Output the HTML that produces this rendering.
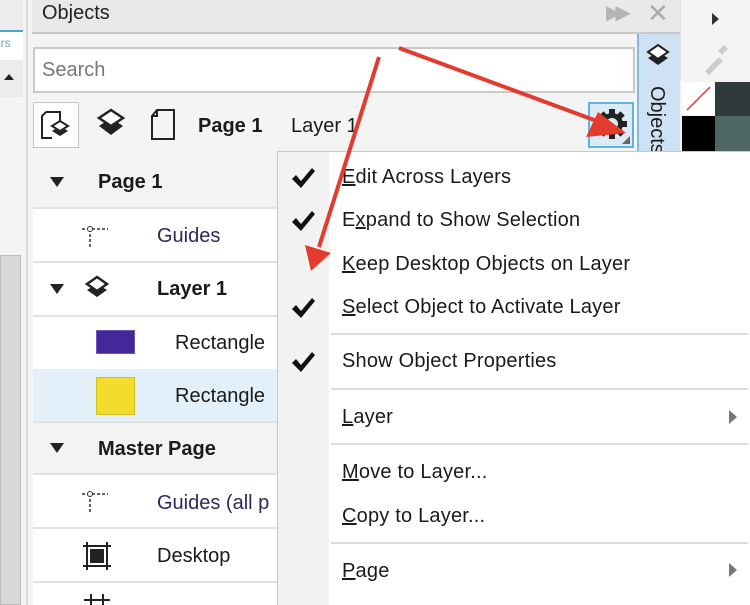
<!DOCTYPE html>
<html><head><meta charset="utf-8"><style>
*{margin:0;padding:0;box-sizing:border-box}
html{overflow:hidden}
body{width:750px;height:605px;overflow:hidden;position:relative;background:#f4f4f4;font-family:"Liberation Sans",sans-serif;color:#1a1a1a}
.a{position:absolute}
.t{position:absolute;font-size:20px;white-space:nowrap}
.row{position:absolute;left:33px;width:245px;border-bottom:2px solid #e2e2e2;background:#fff}
.mi{position:absolute;left:342px;font-size:20px;color:#1a1a1a;white-space:nowrap;letter-spacing:0.2px}
.ck{position:absolute;left:290px;width:26px;height:24px}
.sep{position:absolute;left:331px;right:2px;height:2px;background:#dcdcdc}
</style></head><body>
<svg width="0" height="0" style="position:absolute"><defs><symbol id="ck" viewBox="0 0 26 24"><path d="M2 13l4-4 5 6L22 2l3 3-14 17z" fill="#111"/></symbol></defs></svg>
<!-- left strip -->
<div class="a" style="left:0;top:0;width:24px;height:605px;background:#f4f4f4"></div>
<div class="a" style="left:0;top:0;width:23px;height:31px;background:#ececec"></div>
<div class="a" style="left:0;top:30px;width:23px;height:2px;background:#4aa8d8"></div>
<div class="a" style="left:0;top:32px;width:23px;height:28px;background:#fff"></div>
<div class="t" style="left:-6px;top:36px;font-size:12px;color:#6a9ec0">ers</div>
<div class="a" style="left:0;top:60px;width:23px;height:37px;background:#ececec"></div>
<div class="a" style="left:4px;top:74px;width:0;height:0;border-left:5px solid transparent;border-right:5px solid transparent;border-bottom:6px solid #222"></div>
<div class="a" style="left:0;top:255px;width:21px;height:350px;background:#d8d8d8;border:1px solid #bbb"></div>
<div class="a" style="left:26px;top:0;width:2px;height:605px;background:#dadada"></div>
<!-- header -->
<div class="a" style="left:32px;top:0;width:648px;height:34px;background:#e9e9e9;border-bottom:2px solid #c8c8c8"></div>
<div class="t" style="left:42px;top:2px;font-size:20px;color:#222">Objects</div>
<div class="t" style="left:606px;top:0px;font-size:20px;color:#b5b5b5;letter-spacing:-6px">▶▶</div>
<div class="t" style="left:647px;top:-2px;font-size:26px;color:#aaa">✕</div>
<!-- search -->
<div class="a" style="left:33px;top:47px;width:602px;height:46px;background:#fff;border:2px solid #c9c9c9"></div>
<div class="t" style="left:42px;top:59px;font-size:20px;color:#777">Search</div>
<!-- toolbar -->
<div class="a" style="left:33px;top:102px;width:46px;height:46px;background:#fff;border:1px solid #c4c4c4"></div>
<svg class="a" style="left:38px;top:107px" width="36" height="36" viewBox="0 0 36 36"><path d="M8 5h14v12M8 5l-4 4v22h10" fill="none" stroke="#222" stroke-width="2"/><path d="M22 14l8 5-8 5-8-5z" fill="#fff" stroke="#222" stroke-width="2"/><path d="M14 24l8 5 8-5-3-2-5 3-5-3z" fill="#222"/></svg>
<svg class="a" style="left:93px;top:107px" width="36" height="36" viewBox="0 0 36 36"><path d="M18 3l12 8-12 8-12-8z" fill="#fff" stroke="#222" stroke-width="2.5"/><path d="M6 19l6-4 6 4 6-4 6 4-12 9z" fill="#222"/></svg>
<svg class="a" style="left:148px;top:107px" width="34" height="36" viewBox="0 0 34 36"><path d="M9 3h17v29H4V9z M9 3v6H4" fill="none" stroke="#222" stroke-width="2"/></svg>
<div class="t" style="left:198px;top:115px;font-weight:bold;font-size:20px">Page 1</div>
<div class="t" style="left:291px;top:115px;font-size:20px">Layer 1</div>
<div class="a" style="left:588px;top:102px;width:46px;height:46px;background:#dbeaf6;border:2px solid #5cb6e2"></div>
<svg class="a" style="left:596px;top:108px" width="32" height="32" viewBox="0 0 32 32"><g fill="#222"><circle cx="16" cy="16" r="11"/><g id="tt"><rect x="13" y="1" width="6" height="30"/><rect x="1" y="13" width="30" height="6"/></g><use href="#tt" transform="rotate(45 16 16)"/></g><circle cx="16" cy="16" r="6" fill="#dbeaf6"/></svg>
<div class="a" style="left:622px;top:136px;width:0;height:0;border-left:8px solid transparent;border-bottom:8px solid #666"></div>
<!-- right tab -->
<div class="a" style="left:637px;top:34px;width:43px;height:120px;background:#cfe2f4;border-left:2px solid #7fbde6"></div>
<svg class="a" style="left:644px;top:43px" width="28" height="28" viewBox="0 0 28 28"><path d="M14 2l10 7-10 7-10-7z" fill="#fff" stroke="#222" stroke-width="2"/><path d="M4 15l5-3 5 3 5-3 5 3-10 7z" fill="#222"/></svg>
<div class="t" style="left:646px;top:86px;font-size:20px;transform-origin:0 0;transform:rotate(90deg) translate(0,-22px)">Objects</div>
<!-- far right -->
<div class="a" style="left:680px;top:0;width:70px;height:80px;background:#f4f4f4;border-left:1px solid #ddd"></div>
<div class="a" style="left:712px;top:13px;width:0;height:0;border-top:6px solid transparent;border-bottom:6px solid transparent;border-left:7px solid #333"></div>
<svg class="a" style="left:700px;top:43px" width="30" height="32" viewBox="0 0 30 32"><path d="M5 28l14-14 4 4-14 14z" fill="#ccc"/><path d="M18 8l6-6 4 4-6 6z" fill="#ccc"/></svg>
<div class="a" style="left:682px;top:82px;width:33px;height:33px;background:#fff"></div>
<svg class="a" style="left:682px;top:82px" width="33" height="33"><line x1="5" y1="28" x2="28" y2="5" stroke="#e33" stroke-width="1.5"/></svg>
<div class="a" style="left:715px;top:82px;width:35px;height:35px;background:#2f3a3b"></div>
<div class="a" style="left:682px;top:116px;width:33px;height:40px;background:#000"></div>
<div class="a" style="left:715px;top:116px;width:35px;height:40px;background:#4e6866"></div>
<!-- tree -->
<div class="row" style="top:156px;height:53px;background:#f3f3f3"></div>
<div class="a" style="left:50px;top:177px;border-left:7px solid transparent;border-right:7px solid transparent;border-top:10px solid #222"></div>
<div class="t" style="left:98px;top:171px;font-weight:bold;font-size:20px">Page 1</div>
<div class="row" style="top:209px;height:54px"></div>
<svg class="a" style="left:80px;top:225px" width="30" height="26"><path d="M2 4h26M10 4v20" stroke="#333" stroke-width="1.5" stroke-dasharray="3 2" fill="none"/><circle cx="10" cy="4" r="2.5" fill="#fff" stroke="#333"/></svg>
<div class="t" style="left:157px;top:225px;color:#2a2a5a">Guides</div>
<div class="row" style="top:263px;height:54px"></div>
<div class="a" style="left:50px;top:284px;border-left:7px solid transparent;border-right:7px solid transparent;border-top:10px solid #222"></div>
<svg class="a" style="left:83px;top:275px" width="28" height="28" viewBox="0 0 28 28"><path d="M14 2l10 7-10 7-10-7z" fill="#fff" stroke="#222" stroke-width="2.5"/><path d="M4 15l5-3 5 3 5-3 5 3-10 7z" fill="#222"/></svg>
<div class="t" style="left:157px;top:278px;font-weight:bold;font-size:20px">Layer 1</div>
<div class="row" style="top:317px;height:52px;border-bottom:none"></div>
<div class="a" style="left:96px;top:330px;width:39px;height:24px;background:#44289a;border:1px solid #6a5ab8"></div>
<div class="t" style="left:175px;top:332px">Rectangle</div>
<div class="row" style="top:369px;height:54px;background:#e3f0fa"></div>
<div class="a" style="left:96px;top:377px;width:39px;height:38px;background:#f3dc2c;border:1px solid #d8c020"></div>
<div class="t" style="left:175px;top:385px">Rectangle</div>
<div class="row" style="top:423px;height:52px;background:#f3f3f3"></div>
<div class="a" style="left:50px;top:443px;border-left:7px solid transparent;border-right:7px solid transparent;border-top:10px solid #222"></div>
<div class="t" style="left:98px;top:438px;font-weight:bold;font-size:20px">Master Page</div>
<div class="row" style="top:475px;height:54px"></div>
<svg class="a" style="left:80px;top:490px" width="30" height="26"><path d="M2 4h26M10 4v20" stroke="#333" stroke-width="1.5" stroke-dasharray="3 2" fill="none"/><circle cx="10" cy="4" r="2.5" fill="#fff" stroke="#333"/></svg>
<div class="t" style="left:157px;top:492px;color:#2a2a5a">Guides (all p</div>
<div class="row" style="top:529px;height:54px"></div>
<svg class="a" style="left:82px;top:541px" width="30" height="30"><path d="M5 1v28M25 1v28M1 5h28M1 25h28" stroke="#222" stroke-width="2"/><rect x="8" y="8" width="14" height="14" fill="#222"/></svg>
<div class="t" style="left:157px;top:545px">Desktop</div>
<div class="row" style="top:583px;height:22px;border-bottom:none"></div>
<svg class="a" style="left:82px;top:594px" width="30" height="11"><path d="M9 0v11M21 0v11M2 6h26" stroke="#222" stroke-width="2"/></svg>
<!-- menu -->
<div class="a" style="left:277px;top:151px;width:473px;height:454px;background:#fff;border:1px solid #c8c8c8;border-bottom:none;border-right:none"></div>
<div class="a" style="left:278px;top:152px;width:51px;height:453px;background:#f2f2f2"></div>
<svg class="ck" style="top:166px"><use href="#ck"/></svg>
<div class="mi" style="top:166px"><u>E</u>dit Across Layers</div>
<svg class="ck" style="top:209px"><use href="#ck"/></svg>
<div class="mi" style="top:209px">E<u>x</u>pand to Show Selection</div>
<div class="mi" style="top:253px"><u>K</u>eep Desktop Objects on Layer</div>
<svg class="ck" style="top:296px"><use href="#ck"/></svg>
<div class="mi" style="top:296px"><u>S</u>elect Object to Activate Layer</div>
<div class="sep" style="top:333px"></div>
<svg class="ck" style="top:350px"><use href="#ck"/></svg>
<div class="mi" style="top:350px">Show Object Properties</div>
<div class="sep" style="top:388px"></div>
<div class="mi" style="top:406px"><u>L</u>ayer</div>
<div class="a" style="left:729px;top:410px;border-top:7px solid transparent;border-bottom:7px solid transparent;border-left:8px solid #777"></div>
<div class="sep" style="top:443px"></div>
<div class="mi" style="top:461px"><u>M</u>ove to Layer...</div>
<div class="mi" style="top:505px"><u>C</u>opy to Layer...</div>
<div class="sep" style="top:542px"></div>
<div class="mi" style="top:560px"><u>P</u>age</div>
<div class="a" style="left:729px;top:563px;border-top:7px solid transparent;border-bottom:7px solid transparent;border-left:8px solid #777"></div>
<!-- arrows -->
<svg class="a" style="left:0;top:0" width="750" height="605">
<line x1="399" y1="48" x2="605" y2="124" stroke="#e33b2e" stroke-width="4"/>
<polygon points="626,133 586,137 598,112" fill="#e33b2e"/>
<line x1="379" y1="57" x2="319" y2="247" stroke="#e33b2e" stroke-width="4"/>
<polygon points="311,271 305,245 331,253" fill="#e33b2e"/>
</svg>
</body></html>
